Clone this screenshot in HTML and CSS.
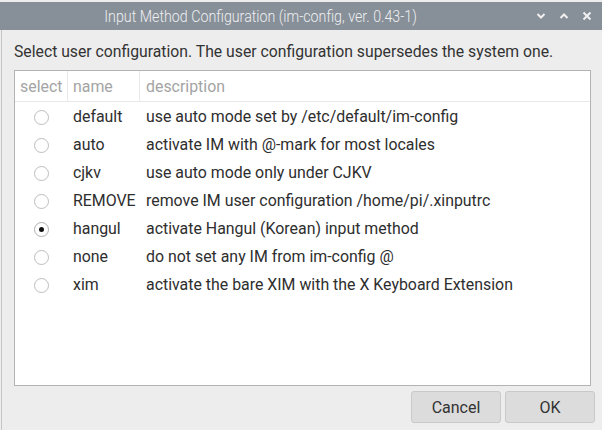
FILE: index.html
```html
<!DOCTYPE html>
<html>
<head>
<meta charset="utf-8">
<link rel="stylesheet" href="styles.css">
</head>
<body>
<div class="window">
  <div class="titlebar">
    <div class="title"><span class="title-text">Input Method Configuration (im-config, ver. 0.43-1)</span></div>
    <div class="controls">
      <svg class="ctl" width="10" height="8" viewBox="0 0 10 8"><path d="M1.5 2 L5 5.5 L8.5 2" fill="none" stroke="#f0f0f0" stroke-width="2"/></svg>
      <svg class="ctl" width="10" height="8" viewBox="0 0 10 8"><path d="M1.5 6 L5 2.5 L8.5 6" fill="none" stroke="#f0f0f0" stroke-width="2"/></svg>
      <svg class="ctl" width="10" height="10" viewBox="0 0 10 10"><path d="M1.5 1.5 L8.5 8.5 M8.5 1.5 L1.5 8.5" fill="none" stroke="#f0f0f0" stroke-width="2"/></svg>
    </div>
  </div>
  <div class="body">
    <div class="prompt">Select user configuration. The user configuration supersedes the system one.</div>
    <div class="list">
      <div class="head">
        <div class="c1 hcell">select</div>
        <div class="c2 hcell">name</div>
        <div class="c3 hcell">description</div>
      </div>
      <div class="row"><div class="c1"><span class="radio"></span></div><div class="c2">default</div><div class="c3">use auto mode set by /etc/default/im-config</div></div>
      <div class="row"><div class="c1"><span class="radio"></span></div><div class="c2">auto</div><div class="c3">activate IM with @-mark for most locales</div></div>
      <div class="row"><div class="c1"><span class="radio"></span></div><div class="c2">cjkv</div><div class="c3">use auto mode only under CJKV</div></div>
      <div class="row"><div class="c1"><span class="radio"></span></div><div class="c2">REMOVE</div><div class="c3">remove IM user configuration /home/pi/.xinputrc</div></div>
      <div class="row"><div class="c1"><span class="radio on"></span></div><div class="c2">hangul</div><div class="c3">activate Hangul (Korean) input method</div></div>
      <div class="row"><div class="c1"><span class="radio"></span></div><div class="c2">none</div><div class="c3">do not set any IM from im-config @</div></div>
      <div class="row"><div class="c1"><span class="radio"></span></div><div class="c2">xim</div><div class="c3">activate the bare XIM with the X Keyboard Extension</div></div>
    </div>
    <div class="buttons">
      <button class="btn">Cancel</button>
      <button class="btn">OK</button>
    </div>
  </div>
</div>
</body>
</html>
```
FILE: styles.css
```css
html, body {
  margin: 0;
  padding: 0;
  width: 602px;
  height: 430px;
  overflow: hidden;
  background: #ededed;
  font-family: Roboto, "Liberation Sans", sans-serif;
}
.window {
  padding-top: 2px;
  height: 428px;
  display: flex;
  flex-direction: column;
}
.titlebar {
  height: 28px;
  background: #878f98;
  display: flex;
  align-items: center;
  position: relative;
}
.title {
  width: 522px;
  text-align: center;
  color: #eef0f2;
  font-size: 16px;
  font-weight: 300;
}
.title-text {
  display: inline-block;
  transform: scaleX(0.89);
  white-space: nowrap;
}
.controls {
  display: flex;
  align-items: center;
  gap: 13px;
  margin-left: 14px;
}
.ctl { display: block; }
.body {
  flex: 1;
  margin-left: 1px;
  border-left: 1px solid #c6c6c6;
  padding: 0 11px 0 12px;
  display: flex;
  flex-direction: column;
}
.prompt {
  font-size: 15.75px;
  color: #333;
  height: 40px;
  line-height: 44px;
  white-space: nowrap;
}
.list {
  height: 314px;
  background: #fff;
  border: 1px solid #b3b3b3;
  font-size: 15.9px;
  color: #2e2e2e;
}
.head {
  display: flex;
  height: 30px;
  border-bottom: 1px solid #e8e8e8;
  margin-bottom: 1px;
}
.hcell {
  color: #a4a4a4;
  line-height: 32px;
  border-right: 1px solid #e8e8e8;
}
.hcell.c3 { border-right: none; }
.c1 { width: 52px; padding-left: 5px; box-sizing: border-box; }
.c2 { width: 72px; padding-left: 5px; }
.c3 { flex: 1; padding-left: 6px; white-space: nowrap; }
.head .c1 { width: 53px; }
.head .c2 { width: 66px; }
.row {
  display: flex;
  height: 28px;
  line-height: 28px;
  align-items: center;
}
.row .c1 {
  display: flex;
  align-items: center;
  justify-content: center;
  padding-left: 0;
  width: 53px;
}
.row .c2 { width: 67px; }
.radio {
  width: 13px;
  height: 13px;
  border: 1px solid #bdbdbd;
  border-radius: 50%;
  background: #fff;
  box-sizing: content-box;
  display: flex;
  align-items: center;
  justify-content: center;
}
.radio.on { border-color: #b0b0b0; }
.radio.on::after {
  content: "";
  width: 5px;
  height: 5px;
  border-radius: 50%;
  background: #111;
}
.buttons {
  display: flex;
  justify-content: flex-end;
  gap: 4px;
  margin-top: 5px;
  margin-right: -4px;
}
.btn {
  width: 90px;
  height: 32px;
  background: #dcdcdc;
  border: 1px solid #c9c9c9;
  border-radius: 3px;
  font-family: Roboto, "Liberation Sans", sans-serif;
  font-size: 16px;
  color: #333;
  padding: 0;
}
```
